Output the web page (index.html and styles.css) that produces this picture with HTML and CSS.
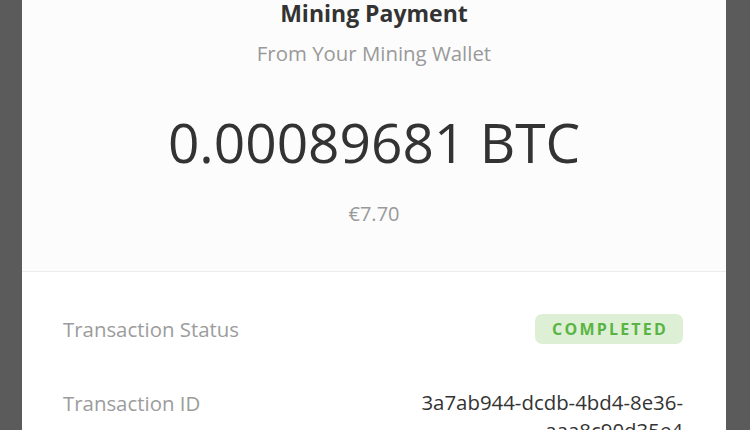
FILE: index.html
```html
<!DOCTYPE html>
<html>
<head>
<meta charset="utf-8">
<link rel="stylesheet" href="styles.css">
</head>
<body>
<div class="overlay">
  <div class="modal">
    <div class="summary">
      <h1 class="title">Mining Payment</h1>
      <p class="subtitle">From Your Mining Wallet</p>
      <p class="amount">0.00089681 BTC</p>
      <p class="fiat">€7.70</p>
    </div>
    <div class="details">
      <div class="row row-status">
        <span class="label">Transaction Status</span>
        <span class="badge">COMPLETED</span>
      </div>
      <div class="row row-id">
        <span class="label">Transaction ID</span>
        <span class="value">3a7ab944-dcdb-4bd4-8e36-<br>aaa8c90d35e4</span>
      </div>
    </div>
  </div>
</div>
</body>
</html>
```
FILE: styles.css
```css
html, body {
  margin: 0;
  padding: 0;
  height: 100%;
  overflow: hidden;
}
body {
  background: #5b5b5b;
  font-family: "Open Sans", "Noto Sans", sans-serif;
}
.overlay {
  display: flex;
  justify-content: flex-start;
  padding-left: 22px;
}
.modal {
  width: 704px;
  background: #ffffff;
  display: flex;
  flex-direction: column;
}
.summary {
  background: #fcfcfc;
  border-bottom: 1px solid #ececec;
  display: flex;
  flex-direction: column;
  align-items: center;
  height: 272px;
  box-sizing: border-box;
}
.title {
  margin: 0;
  font-size: 23px;
  font-weight: 700;
  color: #333333;
  line-height: 26px;
}
.subtitle {
  margin: 14px 0 0;
  font-size: 20.4px;
  color: #999999;
  line-height: 26px;
}
.amount {
  margin: 41px 0 0;
  font-size: 55px;
  font-weight: 400;
  color: #333333;
  line-height: 70px;
}
.fiat {
  margin: 24px 0 0;
  font-size: 20px;
  color: #999999;
  line-height: 26px;
}
.details {
  padding: 42px 43px 0 41px;
  display: flex;
  flex-direction: column;
  gap: 44px;
}
.row {
  display: flex;
  justify-content: space-between;
  align-items: flex-start;
}
.row-status {
  align-items: center;
}
.label {
  font-size: 20.4px;
  color: #9c9c9c;
  line-height: 30px;
}
.badge {
  background: #ddf0d6;
  color: #5ab443;
  font-weight: 700;
  font-size: 16px;
  letter-spacing: 2.2px;
  border-radius: 7px;
  height: 30px;
  line-height: 30px;
  padding: 0 15px 0 17px;
}
.value {
  font-size: 20.4px;
  color: #333333;
  line-height: 28px;
  text-align: right;
}
```
